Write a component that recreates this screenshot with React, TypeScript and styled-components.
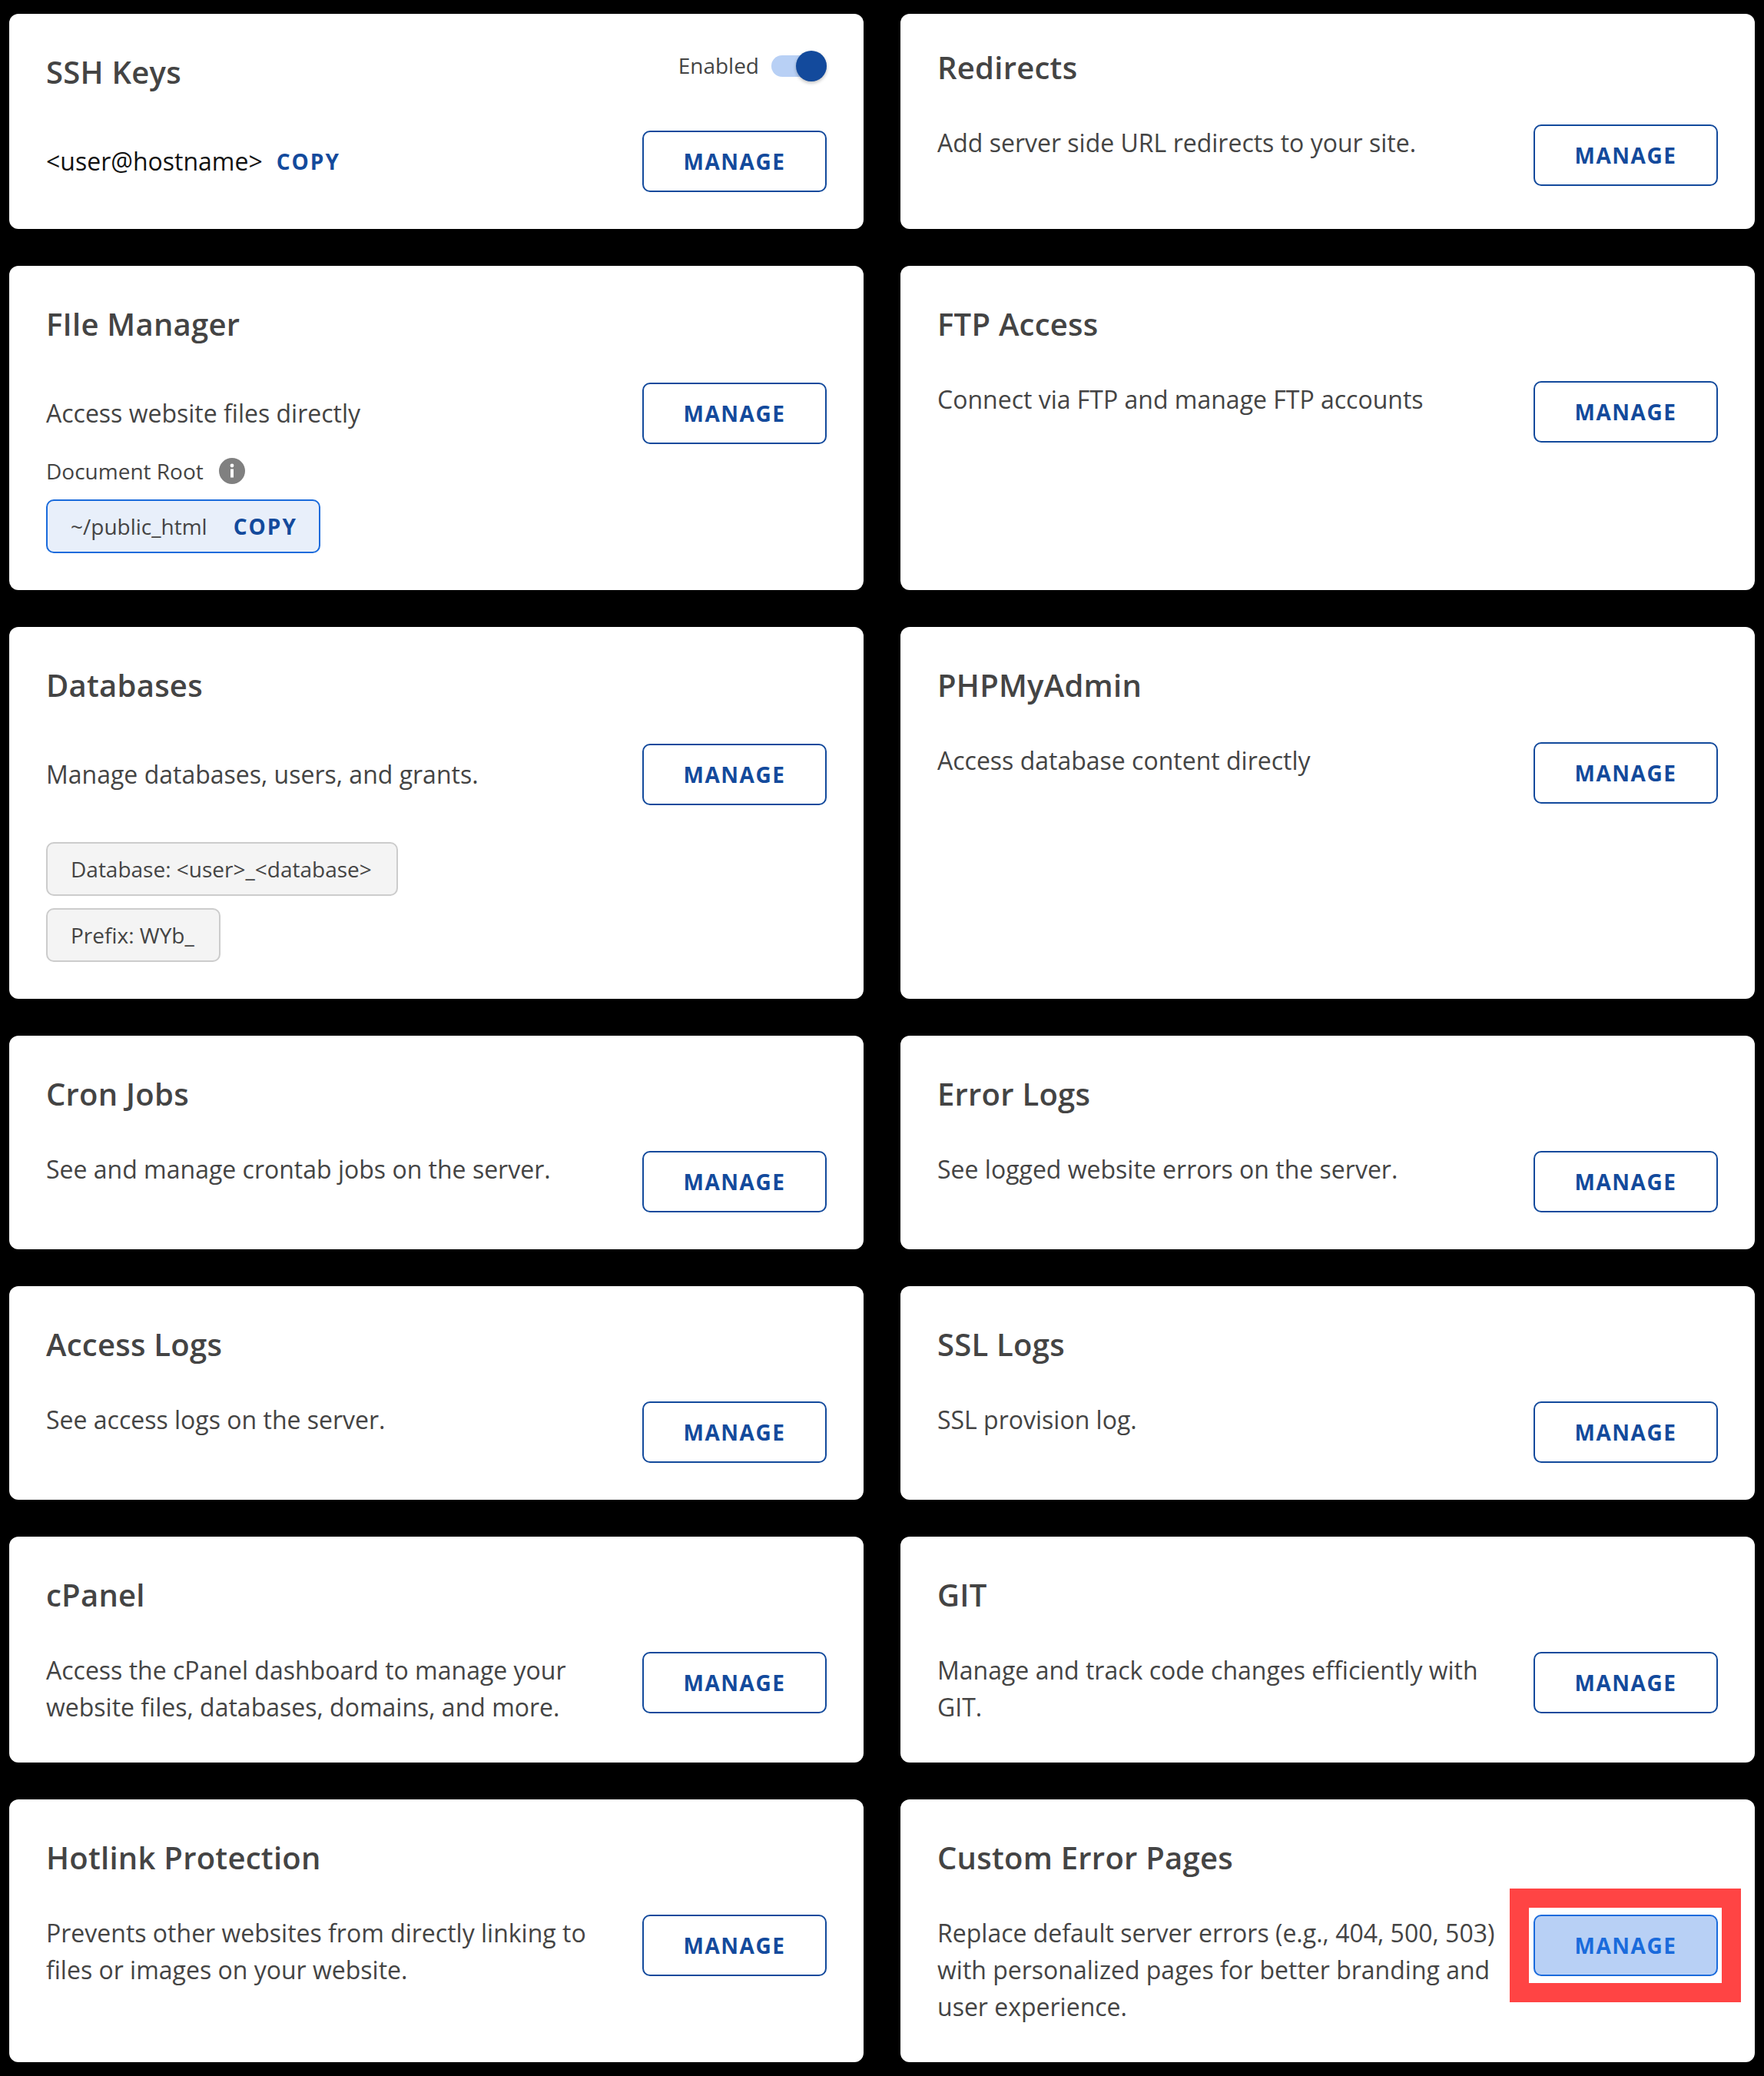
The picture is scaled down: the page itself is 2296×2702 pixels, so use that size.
import React from "react";
import styled, { createGlobalStyle } from "styled-components";

const Global = createGlobalStyle`
  html, body { margin: 0; padding: 0; background: #000; }
  body { font-family: "Open Sans", "Liberation Sans", sans-serif; color: #444; }
  * { box-sizing: border-box; }
`;

const Page = styled.main`
  display: grid;
  grid-template-columns: 1112px 1112px;
  column-gap: 48px;
  row-gap: 48px;
  padding: 18px 12px;
  width: 2296px;
`;

const Card = styled.section<{ $compact?: boolean }>`
  background: #fff;
  border-radius: 12px;
  padding: ${(p) => (p.$compact ? "40px" : "46px")} 48px 48px;
`;

const Header = styled.header<{ $tall?: boolean }>`
  display: flex;
  justify-content: space-between;
  align-items: flex-start;
  margin-bottom: ${(p) => (p.$tall ? "46px" : "44px")};
`;

const Title = styled.h2`
  margin: 0;
  font-size: 40px;
  line-height: 60px;
  font-weight: 600;
  letter-spacing: 0.25px;
  color: #444;
`;

const ToggleGroup = styled.div`
  display: flex;
  align-items: center;
  gap: 16px;
  margin-top: 2px;
`;

const ToggleLabel = styled.span`
  font-size: 28px;
  line-height: 40px;
  color: #444;
  position: relative;
  top: -1px;
`;

const Track = styled.span`
  position: relative;
  display: block;
  width: 72px;
  height: 28px;
  border-radius: 14px;
  background: #b8d0f5;
`;

const Knob = styled.span`
  position: absolute;
  right: 0;
  top: -6px;
  width: 40px;
  height: 40px;
  border-radius: 50%;
  background: #134a9c;
  box-shadow: 0 2px 4px rgba(0, 0, 0, 0.25);
`;

const Body = styled.div<{ $center?: boolean }>`
  display: flex;
  justify-content: space-between;
  align-items: ${(p) => (p.$center ? "center" : "flex-start")};
  gap: 32px;
`;

const Desc = styled.p`
  margin: 0;
  flex: 1;
  font-size: 32px;
  line-height: 48px;
  color: #444;
`;

const SshLine = styled.div`
  flex: 1;
  display: flex;
  align-items: center;
  gap: 18px;
  font-size: 32px;
  line-height: 48px;
  color: #111;
`;

const CopyText = styled.span`
  font-size: 28px;
  font-weight: 700;
  letter-spacing: 2px;
  color: #134a9c;
`;

const ButtonWrap = styled.div`
  position: relative;
  flex: none;
`;

const ManageButton = styled.button<{ $active?: boolean }>`
  display: block;
  width: 240px;
  height: 80px;
  padding: 0;
  border: 2px solid ${(p) => (p.$active ? "#1a6bdc" : "#134a9c")};
  border-radius: 10px;
  background: ${(p) => (p.$active ? "#b8d0f5" : "#fff")};
  color: ${(p) => (p.$active ? "#1a6bdc" : "#134a9c")};
  font-family: inherit;
  font-size: 28px;
  line-height: 40px;
  font-weight: 700;
  letter-spacing: 1.5px;
`;

const Highlight = styled.div`
  position: absolute;
  top: -34px;
  bottom: -34px;
  left: -31px;
  right: -30px;
  border: 25px solid #ff4444;
  pointer-events: none;
`;

const RootLabel = styled.div`
  display: flex;
  align-items: center;
  gap: 20px;
  margin-top: 15px;
  margin-bottom: 17px;
  font-size: 28px;
  line-height: 40px;
  color: #444;
`;

const InfoIcon = styled.svg`
  display: block;
  width: 34px;
  height: 34px;
`;

const Chips = styled.div`
  display: flex;
  flex-direction: column;
  align-items: flex-start;
  gap: 16px;
  margin-top: 48px;
`;

const Chip = styled.div<{ $blue?: boolean }>`
  display: inline-flex;
  align-items: center;
  gap: 34px;
  height: 70px;
  padding: 0 ${(p) => (p.$blue ? "28px" : "32px")} 0 30px;
  border: 2px solid ${(p) => (p.$blue ? "#1a6bdc" : "#cccccc")};
  border-radius: 10px;
  background: ${(p) => (p.$blue ? "#e8effa" : "#f4f4f4")};
  font-size: 28px;
  color: #444;
`;

type Item = { title: string; desc: string; compact?: boolean };

const Manage = ({ active }: { active?: boolean }) => (
  <ButtonWrap>
    <ManageButton $active={active}>MANAGE</ManageButton>
    {active && <Highlight />}
  </ButtonWrap>
);

const Simple = ({ title, desc, compact, active }: Item & { active?: boolean }) => (
  <Card $compact={compact}>
    <Header>
      <Title>{title}</Title>
    </Header>
    <Body>
      <Desc>{desc}</Desc>
      <Manage active={active} />
    </Body>
  </Card>
);

export default function App() {
  return (
    <>
      <Global />
      <Page>
        <Card>
          <Header $tall>
            <Title>SSH Keys</Title>
            <ToggleGroup>
              <ToggleLabel>Enabled</ToggleLabel>
              <Track>
                <Knob />
              </Track>
            </ToggleGroup>
          </Header>
          <Body $center>
            <SshLine>
              <span>{"<user@hostname>"}</span>
              <CopyText>COPY</CopyText>
            </SshLine>
            <Manage />
          </Body>
        </Card>
        <Simple compact title="Redirects" desc="Add server side URL redirects to your site." />

        <Card>
          <Header $tall>
            <Title>FIle Manager</Title>
          </Header>
          <Body $center>
            <Desc>Access website files directly</Desc>
            <Manage />
          </Body>
          <RootLabel>
            Document Root
            <InfoIcon viewBox="0 0 34 34" aria-hidden="true">
              <circle cx="17" cy="17" r="17" fill="#808080" />
              <circle cx="17" cy="10" r="2.4" fill="#fff" />
              <rect x="15" y="14.5" width="4" height="11" fill="#fff" />
            </InfoIcon>
          </RootLabel>
          <Chip $blue>
            ~/public_html
            <CopyText>COPY</CopyText>
          </Chip>
        </Card>
        <Simple title="FTP Access" desc="Connect via FTP and manage FTP accounts" />

        <Card>
          <Header $tall>
            <Title>Databases</Title>
          </Header>
          <Body $center>
            <Desc>Manage databases, users, and grants.</Desc>
            <Manage />
          </Body>
          <Chips>
            <Chip>{"Database: <user>_<database>"}</Chip>
            <Chip>Prefix: WYb_</Chip>
          </Chips>
        </Card>
        <Simple title="PHPMyAdmin" desc="Access database content directly" />

        <Simple title="Cron Jobs" desc="See and manage crontab jobs on the server." />
        <Simple title="Error Logs" desc="See logged website errors on the server." />

        <Simple title="Access Logs" desc="See access logs on the server." />
        <Simple title="SSL Logs" desc="SSL provision log." />

        <Simple
          title="cPanel"
          desc="Access the cPanel dashboard to manage your website files, databases, domains, and more."
        />
        <Simple title="GIT" desc="Manage and track code changes efficiently with GIT." />

        <Simple
          title="Hotlink Protection"
          desc="Prevents other websites from directly linking to files or images on your website."
        />
        <Simple
          active
          title="Custom Error Pages"
          desc="Replace default server errors (e.g., 404, 500, 503) with personalized pages for better branding and user experience."
        />
      </Page>
    </>
  );
}
